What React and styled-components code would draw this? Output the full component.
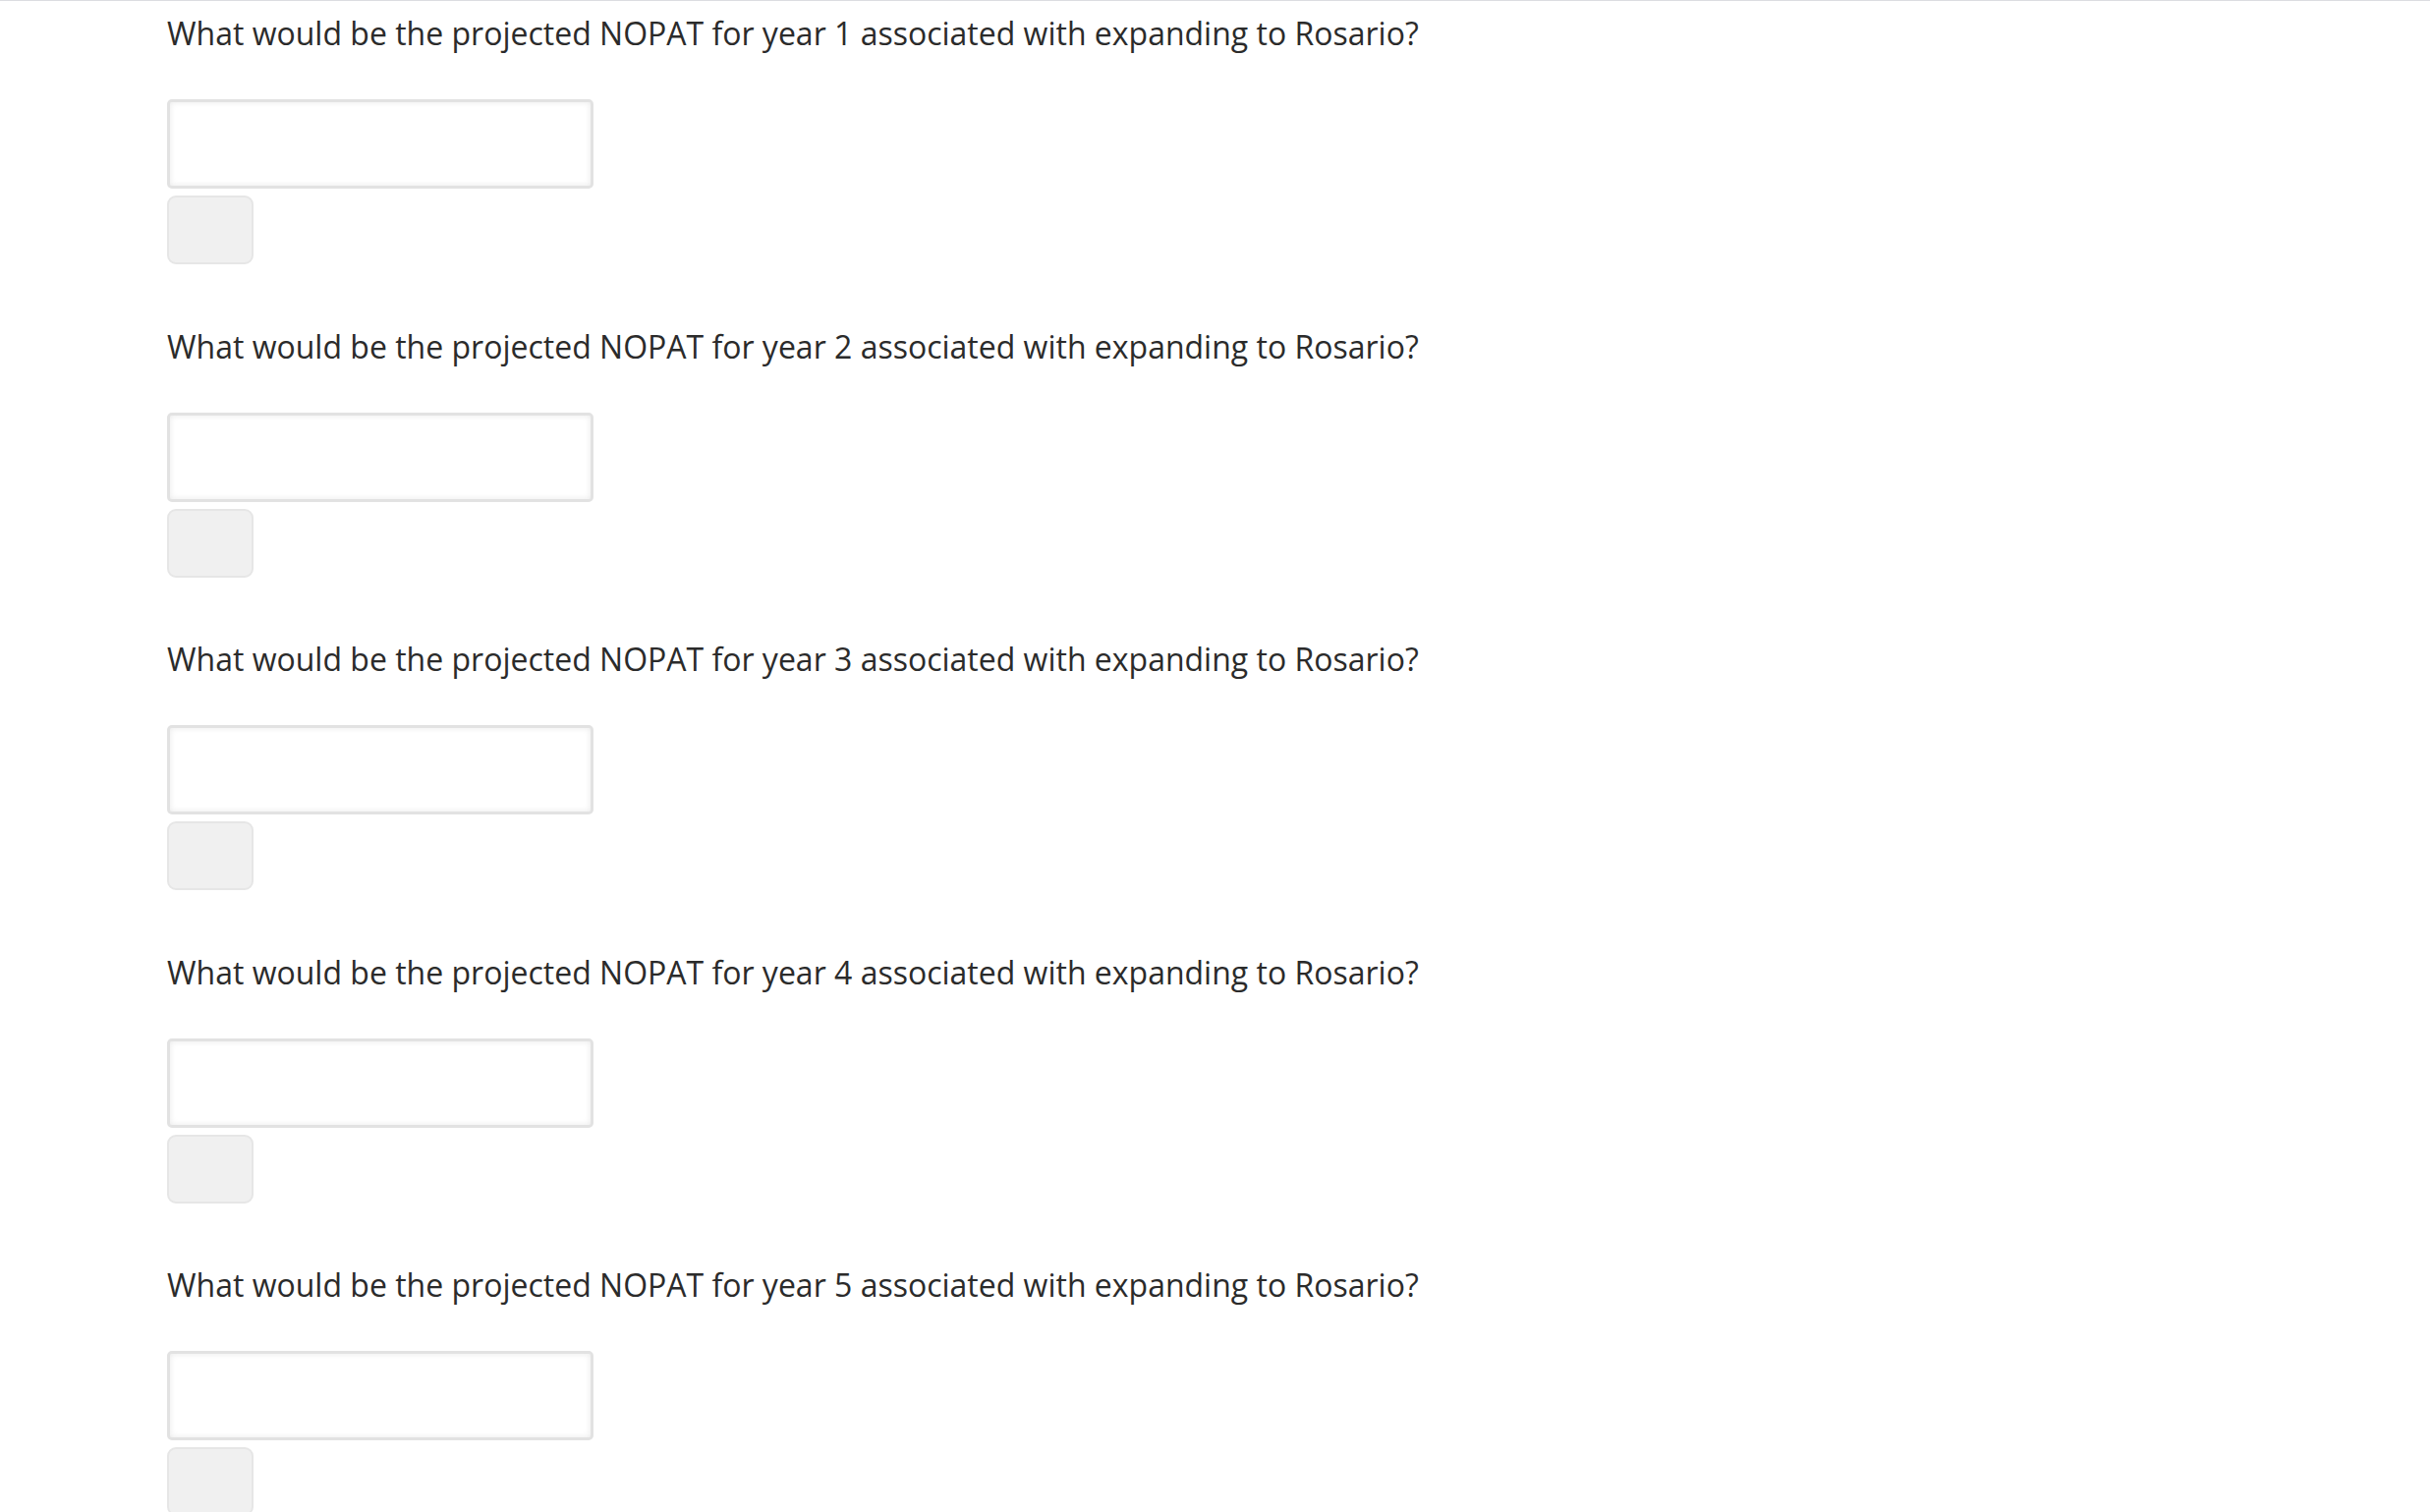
import React from 'react';
import styled, { createGlobalStyle } from 'styled-components';

// Базовые стили страницы
const GlobalStyle = createGlobalStyle`
  html, body {
    margin: 0;
    padding: 0;
    background: #ffffff;
  }
  body {
    font-family: "Open Sans", "Noto Sans", sans-serif;
    color: #2b2b2b;
  }
`;

const Page = styled.div`
  border-top: 1px solid #dcdde1;
  padding: 11px 0 0 170px;
  min-height: 1539px;
  box-sizing: border-box;
`;

const Block = styled.div`
  display: flex;
  flex-direction: column;
  align-items: flex-start;
  margin-bottom: 61.5px;
`;

const Question = styled.p`
  margin: 0;
  font-size: 32px;
  line-height: 44px;
  font-stretch: 88%;
  white-space: nowrap;
`;

const Field = styled.input`
  margin-top: 45px;
  width: 434px;
  height: 91px;
  box-sizing: border-box;
  border: 3px solid #e2e2e2;
  border-radius: 5px;
  background: #ffffff;
  box-shadow: inset 0 0 6px rgba(0, 0, 0, 0.09);
  outline: none;
  font-size: 28px;
  padding: 0 16px;
`;

const Check = styled.button`
  margin-top: 7px;
  width: 88px;
  height: 70px;
  box-sizing: border-box;
  border: 2px solid #e6e6e6;
  border-radius: 9px;
  background: #f0f0f0;
  cursor: pointer;
`;

const years = [1, 2, 3, 4, 5];

const App = () => {
  return (
    <>
      <GlobalStyle />
      <Page>
        {years.map((year) => (
          <Block key={year}>
            <Question>
              What would be the projected NOPAT for year {year} associated with expanding to Rosario?
            </Question>
            <Field type="text" />
            <Check type="button" />
          </Block>
        ))}
      </Page>
    </>
  );
};

export default App;
